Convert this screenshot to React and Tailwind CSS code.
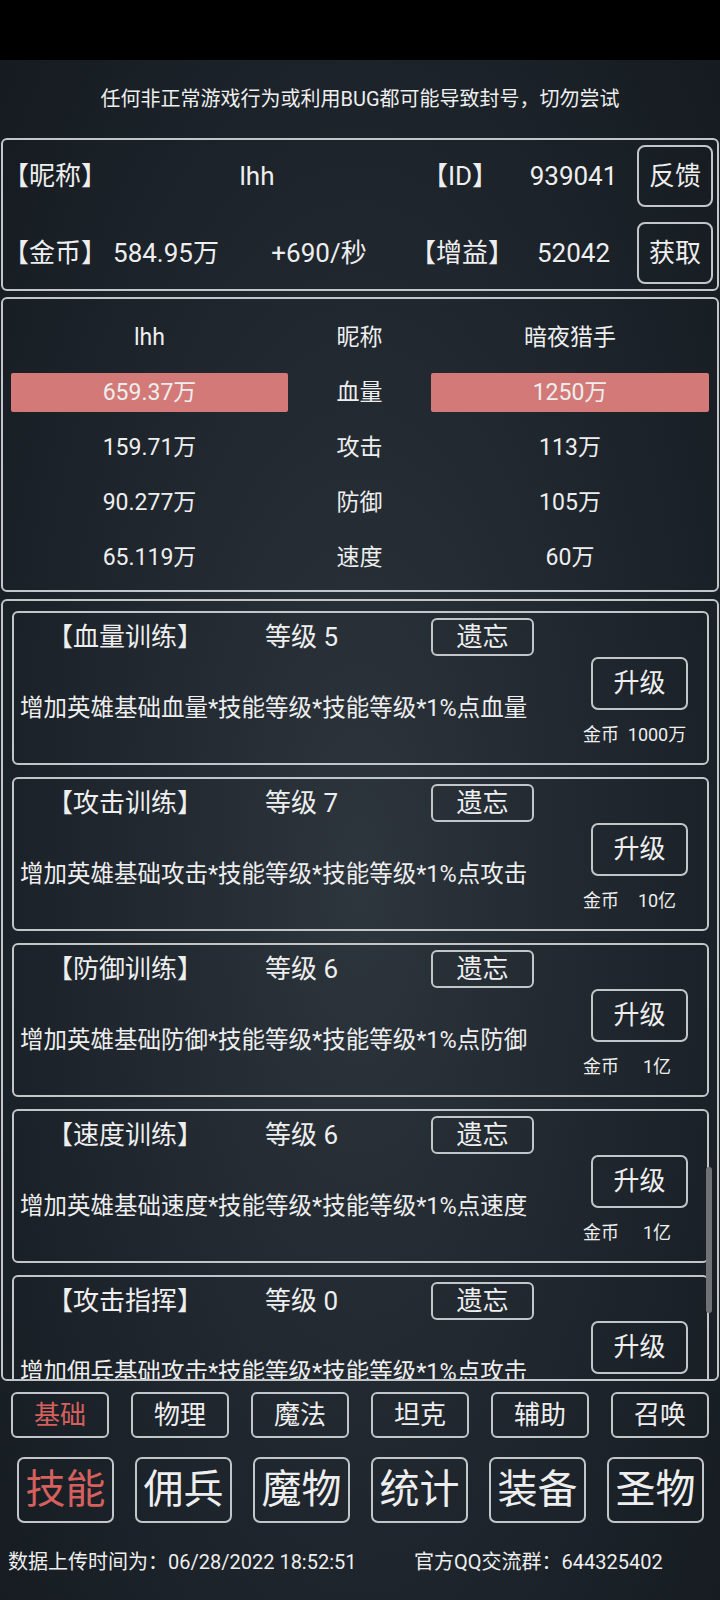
import React from 'react';

const skills = [
    { name: '血量训练', lv: 5, desc: '增加英雄基础血量*技能等级*技能等级*1%点血量', cost: '1000万' },
    { name: '攻击训练', lv: 7, desc: '增加英雄基础攻击*技能等级*技能等级*1%点攻击', cost: '10亿' },
    { name: '防御训练', lv: 6, desc: '增加英雄基础防御*技能等级*技能等级*1%点防御', cost: '1亿' },
    { name: '速度训练', lv: 6, desc: '增加英雄基础速度*技能等级*技能等级*1%点速度', cost: '1亿' },
    { name: '攻击指挥', lv: 0, desc: '增加佣兵基础攻击*技能等级*技能等级*1%点攻击', cost: '' },
];

const stats = [
    { me: '659.37万', label: '血量', foe: '1250万', bar: true },
    { me: '159.71万', label: '攻击', foe: '113万' },
    { me: '90.277万', label: '防御', foe: '105万' },
    { me: '65.119万', label: '速度', foe: '60万' },
];

const tabs = ['基础', '物理', '魔法', '坦克', '辅助', '召唤'];
const pages = ['技能', '佣兵', '魔物', '统计', '装备', '圣物'];

function SkillCard({ skill }) {
    return (
        <div className="h-[154px] shrink-0 rounded-[6px] border-2 border-[#c3c6c9] flex">
            <div className="w-[569px] flex flex-col">
                <div className="flex items-center h-[38px] mt-[5px]">
                    <div className="w-[222px] text-center text-[26px] leading-[32px]">【{skill.name}】</div>
                    <div className="w-[131px] text-center text-[26px] leading-[32px]">等级 {skill.lv}</div>
                    <div className="ml-[64px] w-[103px] h-[38px] border-2 border-[#c3c6c9] rounded-[6px] flex items-center justify-center text-[26px]">遗忘</div>
                </div>
                <div className="mt-[37px] pl-[6px] text-[23.5px] leading-[30px] whitespace-nowrap">{skill.desc}</div>
            </div>
            <div className="w-[124px] flex flex-col">
                <div className="ml-[8px] mt-[44px] w-[97px] h-[53px] border-2 border-[#c3c6c9] rounded-[7px] flex items-center justify-center text-[26px]">升级</div>
                <div className="mt-[13px] flex items-center text-[18px] leading-[24px]">
                    <span className="w-[42px]">金币</span>
                    <span className="w-[64px] text-center">{skill.cost}</span>
                </div>
            </div>
        </div>
    );
}

export default function App() {
    return (
        <div className="w-[720px] h-[1600px] overflow-hidden text-[#eeeeee] font-[Roboto,'Noto_Sans_CJK_SC',sans-serif] bg-[radial-gradient(ellipse_at_50%_55%,#2d353d_0%,#1e252c_55%,#141a1f_100%)] flex flex-col">
            <div className="h-[60px] bg-black shrink-0" />

            <div className="h-[78px] flex items-center justify-center text-[20px] leading-[28px]">
                任何非正常游戏行为或利用BUG都可能导致封号，切勿尝试
            </div>

            {/* player info */}
            <div className="mx-px h-[153px] border-2 border-[#c3c6c9] rounded-[6px] pt-[5px] flex flex-col gap-[15px] text-[26px] leading-[32px]">
                <div className="flex items-center h-[62px]">
                    <div className="w-[101px] text-center">【昵称】</div>
                    <div className="w-[306px] text-center">lhh</div>
                    <div className="w-[100px] text-center">【ID】</div>
                    <div className="w-[127px] text-center">939041</div>
                    <div className="w-[76px] h-[62px] border-2 border-[#c3c6c9] rounded-[8px] flex items-center justify-center">反馈</div>
                </div>
                <div className="flex items-center h-[62px]">
                    <div className="w-[101px] text-center">【金币】</div>
                    <div className="w-[124px] text-center">584.95万</div>
                    <div className="w-[182px] text-center">+690/秒</div>
                    <div className="w-[100px] text-center">【增益】</div>
                    <div className="w-[127px] text-center">52042</div>
                    <div className="w-[76px] h-[62px] border-2 border-[#c3c6c9] rounded-[8px] flex items-center justify-center">获取</div>
                </div>
            </div>

            {/* compare */}
            <div className="mx-px mt-[6px] h-[295px] border-2 border-[#c3c6c9] rounded-[6px] pt-[11px] text-[23px] leading-[30px]">
                <div className="flex items-center h-[55px] px-[8px]">
                    <div className="w-[277px] text-center">lhh</div>
                    <div className="w-[143px] text-center">昵称</div>
                    <div className="w-[278px] text-center">暗夜猎手</div>
                </div>
                {stats.map(s => (
                    <div key={s.label} className="flex items-center h-[55px] px-[8px]">
                        <div className={`w-[277px] h-[39px] flex items-center justify-center rounded-[2px] ${s.bar ? 'bg-[#d37a78]' : ''}`}>{s.me}</div>
                        <div className="w-[143px] text-center">{s.label}</div>
                        <div className={`w-[278px] h-[39px] flex items-center justify-center rounded-[2px] ${s.bar ? 'bg-[#d37a78]' : ''}`}>{s.foe}</div>
                    </div>
                ))}
            </div>

            {/* skills list */}
            <div className="relative mx-px mt-[7px] h-[782px] border-2 border-[#c3c6c9] rounded-[6px] overflow-hidden pt-[10px] pl-[9px] pr-[8px] flex flex-col gap-[12px]">
                {skills.map(s => <SkillCard key={s.name} skill={s} />)}
                <div className="absolute right-[5px] top-[566px] w-[6px] h-[146px] rounded-full bg-[#6f7377]" />
            </div>

            <div className="mt-[11px] pl-[11px] flex gap-[22px]">
                {tabs.map((t, i) => (
                    <div key={t} className={`w-[98px] h-[46px] border-2 border-[#c3c6c9] rounded-[6px] flex items-center justify-center text-[26px] ${i === 0 ? 'text-[#d6605e]' : ''}`}>{t}</div>
                ))}
            </div>

            <div className="mt-[19px] pl-[17px] flex gap-[21px]">
                {pages.map((t, i) => (
                    <div key={t} className={`w-[97px] h-[66px] border-2 border-[#c3c6c9] rounded-[7px] flex items-center justify-center text-[40px] ${i === 0 ? 'text-[#d6605e]' : ''}`}>{t}</div>
                ))}
            </div>

            <div className="mt-[25px] flex text-[20px] leading-[28px] whitespace-nowrap">
                <div className="w-[414px] pl-[8px]">数据上传时间为：06/28/2022 18:52:51</div>
                <div>官方QQ交流群：644325402</div>
            </div>
        </div>
    );
}
